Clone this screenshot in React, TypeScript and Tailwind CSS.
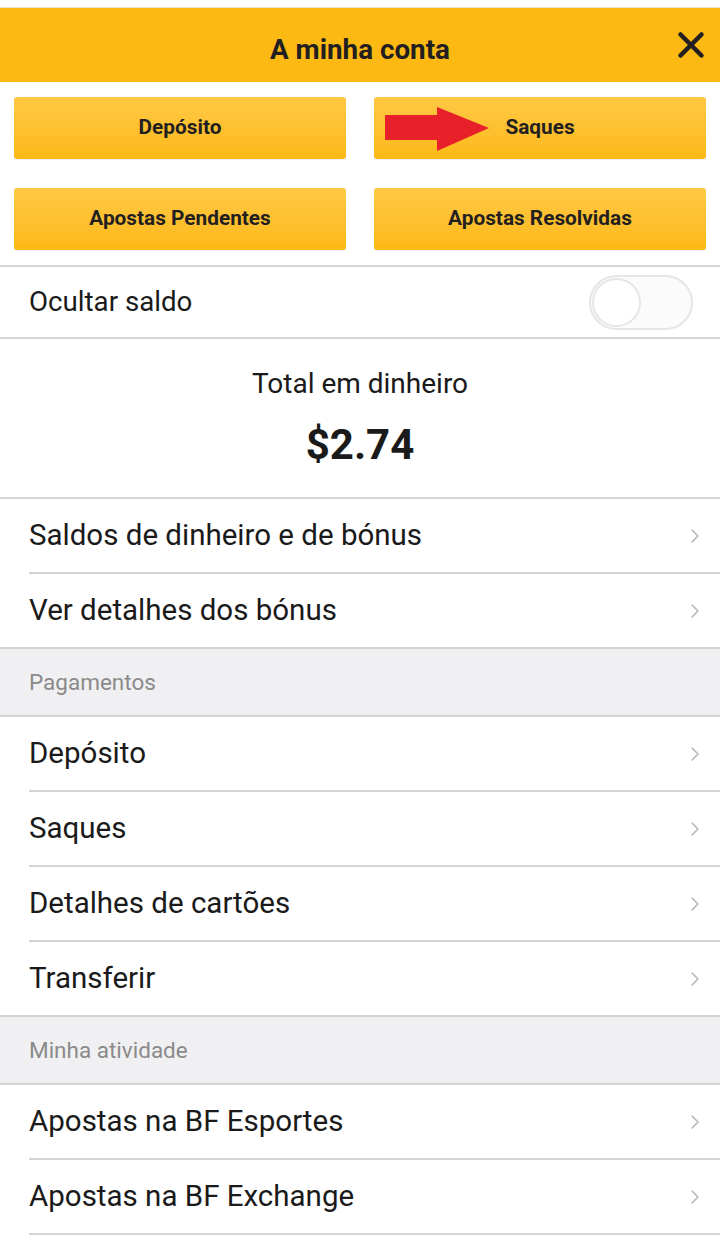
import { X } from "lucide-react"

function Chevron() {
  return (
    <svg width="10" height="16" viewBox="0 0 10 16" className="shrink-0">
      <path d="M2 2 L8 8 L2 14" fill="none" stroke="#b8b8b8" strokeWidth="1.6" strokeLinecap="round" strokeLinejoin="round" />
    </svg>
  )
}

function Divider({ inset = false }: { inset?: boolean }) {
  return <div className={`h-[2px] bg-[#d4d4d4] ${inset ? "ml-[29px]" : ""}`} />
}

function MenuRow({ label }: { label: string }) {
  return (
    <div className="h-[73px] flex items-center justify-between pl-[29px] pr-[20px]">
      <span className="text-[29.5px] leading-none text-[#1a1a1a]">{label}</span>
      <Chevron />
    </div>
  )
}

function SectionHeader({ label }: { label: string }) {
  return (
    <div className="h-[66px] bg-[#f0f0f2] flex items-center pl-[29px]">
      <span className="text-[22.5px] leading-none text-[#8a8a8a]">{label}</span>
    </div>
  )
}

function ActionButton({ label, children }: { label: string; children?: React.ReactNode }) {
  return (
    <button className="relative h-[62px] rounded-[3px] bg-gradient-to-b from-[#ffc843] to-[#fdb913] shadow-[0_1px_1px_rgba(0,0,0,0.08)] flex items-center justify-center text-[20.8px] font-bold text-[#231f20]">
      {children}
      {label}
    </button>
  )
}

export default function App() {
  return (
    <div className="w-full min-h-screen bg-white font-['Roboto',sans-serif]">
      {/* top strip */}
      <div className="h-[8px] bg-white border-b border-[#ebe3cc]" />

      {/* Header */}
      <div className="relative h-[74px] bg-[#fdb913] flex items-center justify-center pt-[9px]">
        <h1 className="text-[27.8px] font-bold text-[#231f20]">A minha conta</h1>
        <button className="absolute right-[8px] top-[16px] text-[#231f20]">
          <X className="w-[42px] h-[42px]" strokeWidth={2.6} />
        </button>
      </div>

      {/* Quick actions */}
      <div className="grid grid-cols-2 gap-x-[28px] gap-y-[29px] px-[14px] pt-[15px] pb-[15px]">
        <ActionButton label="Depósito" />
        <ActionButton label="Saques">
          {/* red annotation arrow */}
          <svg className="absolute left-[11px] top-[10px]" width="106" height="44" viewBox="0 0 106 44">
            <polygon points="0,8 52,8 52,0 104,21 52,44 52,33 0,33" fill="#e8202a" />
          </svg>
        </ActionButton>
        <ActionButton label="Apostas Pendentes" />
        <ActionButton label="Apostas Resolvidas" />
      </div>

      <Divider />

      {/* Hide balance */}
      <div className="h-[70px] flex items-center justify-between pl-[29px] pr-[27px]">
        <span className="text-[27.7px] leading-none text-[#1a1a1a]">Ocultar saldo</span>
        <div className="w-[104px] h-[55px] rounded-full border-2 border-[#e6e6e6] bg-[#fbfbfb] flex items-center px-[1px]">
          <div className="w-[49px] h-[49px] rounded-full bg-white border-2 border-[#e6e6e6]" />
        </div>
      </div>

      <Divider />

      {/* Total */}
      <div className="h-[158px] flex flex-col items-center pt-[31px]">
        <span className="text-[28px] leading-none text-[#1a1a1a]">Total em dinheiro</span>
        <span className="mt-[26px] text-[42px] leading-none font-bold text-[#1a1a1a]">$2.74</span>
      </div>

      <Divider />
      <MenuRow label="Saldos de dinheiro e de bónus" />
      <Divider inset />
      <MenuRow label="Ver detalhes dos bónus" />
      <Divider />

      <SectionHeader label="Pagamentos" />
      <Divider />
      <MenuRow label="Depósito" />
      <Divider inset />
      <MenuRow label="Saques" />
      <Divider inset />
      <MenuRow label="Detalhes de cartões" />
      <Divider inset />
      <MenuRow label="Transferir" />
      <Divider />

      <SectionHeader label="Minha atividade" />
      <Divider />
      <MenuRow label="Apostas na BF Esportes" />
      <Divider inset />
      <MenuRow label="Apostas na BF Exchange" />
      <Divider inset />
    </div>
  )
}
